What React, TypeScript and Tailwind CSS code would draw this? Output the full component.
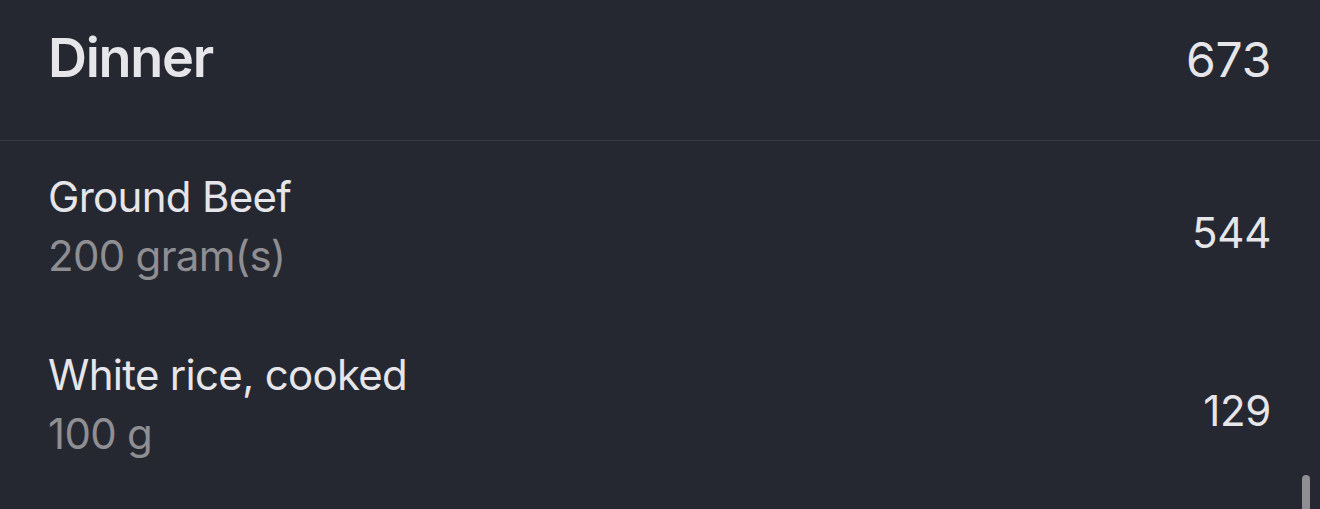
import React from "react";

const items = [
  { name: "Ground Beef", qty: "200 gram(s)", kcal: "544" },
  { name: "White rice, cooked", qty: "100 g", kcal: "129" },
];

export default function App() {
  return (
    <div
      className="relative w-[1320px] h-[509px] overflow-hidden bg-[#262831] text-[#e5e5ea]"
      style={{ fontFamily: "Inter, 'Noto Sans', sans-serif" }}
    >
      <div className="flex items-baseline justify-between pl-[48px] pr-[49px] pt-[26px] h-[141px] border-b border-[#3a3c44]">
        <div className="text-[54px] leading-[64px] font-semibold tracking-[-1.3px]">Dinner</div>
        <div className="text-[48px] leading-[64px] font-normal tracking-[-0.3px]">673</div>
      </div>
      <div className="flex flex-col gap-[60px] pt-[26px] pl-[48px] pr-[49px]">
        {items.map((it) => (
          <div key={it.name} className="flex items-center justify-between">
            <div className="flex flex-col tracking-[-0.7px]">
              <div className="text-[42px] leading-[59px]">{it.name}</div>
              <div className="text-[42px] leading-[59px] text-[#8e8e93]">{it.qty}</div>
            </div>
            <div className="text-[42px] leading-[59px] pt-[12px] tracking-[-0.3px]">{it.kcal}</div>
          </div>
        ))}
      </div>
      <div className="absolute left-[1302px] top-[475px] w-[8px] h-[50px] rounded-full bg-[#8e8e93]" />
    </div>
  );
}
